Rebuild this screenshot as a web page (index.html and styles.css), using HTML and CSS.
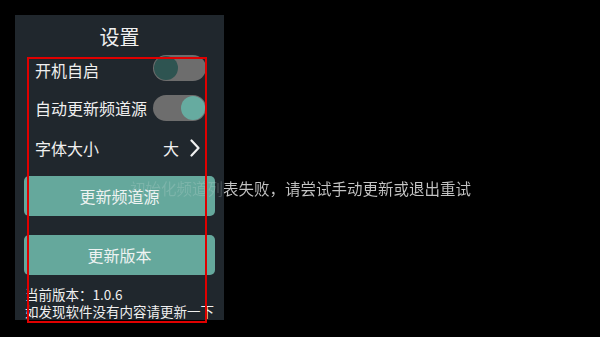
FILE: index.html
```html
<!DOCTYPE html>
<html lang="zh-CN">
<head>
  <meta charset="UTF-8" />
  <title>设置</title>
  <link rel="stylesheet" href="styles.css">
</head>
<body>

<div class="panel">
  <div class="title">设置</div>

  <div class="row">
    <span>开机自启</span>
    <div class="switch"><div class="knob"></div></div>
  </div>

  <div class="row">
    <span>自动更新频道源</span>
    <div class="switch on"><div class="knob"></div></div>
  </div>

  <div class="row">
    <span>字体大小</span>
    <div class="value">
      <span>大</span>
      <svg class="chevron" width="10" height="18" viewBox="0 0 10 18">
        <polyline points="1.5,1.5 8.5,9 1.5,16.5" fill="none" stroke="#f0f0f0" stroke-width="2.2" stroke-linecap="round" stroke-linejoin="round"/>
      </svg>
    </div>
  </div>

  <button class="btn btn-first">更新频道源</button>
  <button class="btn">更新版本</button>

  <div class="info">
    <div>当前版本：1.0.6</div>
    <div>如发现软件没有内容请更新一下</div>
    <div>若更新后仍然没有内容请联系客服</div>
  </div>
</div>

<div class="toast">初始化频道列表失败，请尝试手动更新或退出重试</div>

<div class="mark"></div>

</body>
</html>
```

FILE: styles.css
```css
html, body { margin: 0; padding: 0; height: 100%; background-color: #000; overflow: hidden; }
body { padding: 15px; box-sizing: border-box; font-family: "Noto Sans CJK SC", "Noto Sans", sans-serif; color: #f0f0f0; }

.panel {
  position: relative;
  z-index: 1;
  width: 209px;
  height: 305px;
  background-color: #20272d;
  overflow: hidden;
  display: flex;
  flex-direction: column;
}
.panel > * { flex-shrink: 0; }
.title { padding-top: 11px; height: 22px; line-height: 22px; font-size: 20px; text-align: center; }

.row { height: 40px; display: flex; align-items: center; justify-content: space-between; padding: 0 18px 0 20px; font-size: 16px; }
.row:nth-of-type(2) > span { padding-top: 3px; }

.switch { width: 53px; height: 26px; border-radius: 13px; background-color: #6d6d6d; position: relative; }
.knob { position: absolute; top: 1px; left: 1px; width: 24px; height: 24px; border-radius: 50%; background-color: #2e5451; }
.switch.on .knob { left: auto; right: 1px; background-color: #66aba0; }

.value { display: flex; align-items: center; gap: 11px; margin-right: 6px; }
.chevron { display: block; }

.btn {
  margin: 19px 9px 0 9px;
  height: 40px;
  border: none;
  border-radius: 5px;
  background-color: #65a89c;
  color: #eef3f2;
  font-family: inherit;
  font-size: 16px;
}
.btn-first { margin-top: 8px; }

.info { margin-top: 11px; padding-left: 10px; font-size: 13.5px; line-height: 17px; white-space: nowrap; }

.toast {
  position: absolute;
  z-index: 2;
  left: 130px;
  top: 177px;
  font-size: 15.5px;
  line-height: 22px;
  white-space: nowrap;
  color: transparent;
  background: linear-gradient(to right, rgba(210, 225, 222, 0.22) 0 94px, #c4c4c4 94px);
  -webkit-background-clip: text;
  background-clip: text;
}

.mark {
  position: absolute;
  z-index: 3;
  left: 27px;
  top: 57px;
  width: 176px;
  height: 262px;
  border: 2px solid #e00000;
}
```
